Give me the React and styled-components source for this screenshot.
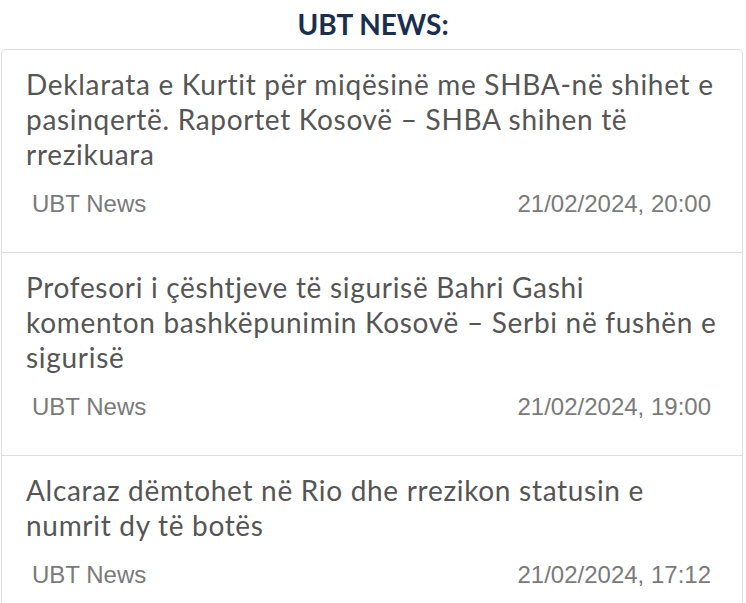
import styled, { createGlobalStyle } from 'styled-components'

const GlobalStyle = createGlobalStyle`
  body {
    margin: 0;
    background: #fff;
  }
`

const Wrapper = styled.div`
  width: 746px;
  padding-top: 10px;
`

const Title = styled.h2`
  margin: 0 0 10px;
  text-align: center;
  font-family: Lato, 'Noto Sans', sans-serif;
  font-weight: 700;
  font-size: 28px;
  line-height: 29px;
  color: #1a2e4e;
`

const Card = styled.div`
  margin: 0 3px 0 1px;
  border: 1px solid #dddddd;
  border-radius: 5px;
  background: #fff;
`

const Item = styled.article`
  padding: 17px 24px 36px 24px;
  border-top: ${(p) => (p.first ? 'none' : '1px solid #dddddd')};
`

const Headline = styled.a`
  display: block;
  font-family: Lato, 'Noto Sans', sans-serif;
  font-weight: 400;
  font-size: 28px;
  line-height: 35px;
  letter-spacing: 0.7px;
  font-variant-ligatures: none;
  color: #555555;
  text-decoration: none;
`

const Meta = styled.div`
  display: flex;
  justify-content: space-between;
  align-items: center;
  margin-top: 20px;
  padding: 0 7px 0 6px;
  font-family: 'Liberation Sans', Arial, sans-serif;
  font-size: 24px;
  line-height: 24px;
  color: #7a7a7a;
`

const news = [
  {
    title: 'Deklarata e Kurtit për miqësinë me SHBA-në shihet e pasinqertë. Raportet Kosovë – SHBA shihen të rrezikuara',
    date: '21/02/2024, 20:00',
  },
  {
    title: 'Profesori i çështjeve të sigurisë Bahri Gashi komenton bashkëpunimin Kosovë – Serbi në fushën e sigurisë',
    date: '21/02/2024, 19:00',
  },
  {
    title: 'Alcaraz dëmtohet në Rio dhe rrezikon statusin e numrit dy të botës',
    date: '21/02/2024, 17:12',
  },
]

const App = () => {
  return (
    <Wrapper>
      <GlobalStyle />
      <Title>UBT NEWS:</Title>
      <Card>
        {news.map((n, i) => (
          <Item key={i} first={i === 0}>
            <Headline href='#'>{n.title}</Headline>
            <Meta>
              <span>UBT News</span>
              <span>{n.date}</span>
            </Meta>
          </Item>
        ))}
      </Card>
    </Wrapper>
  )
}

export default App
